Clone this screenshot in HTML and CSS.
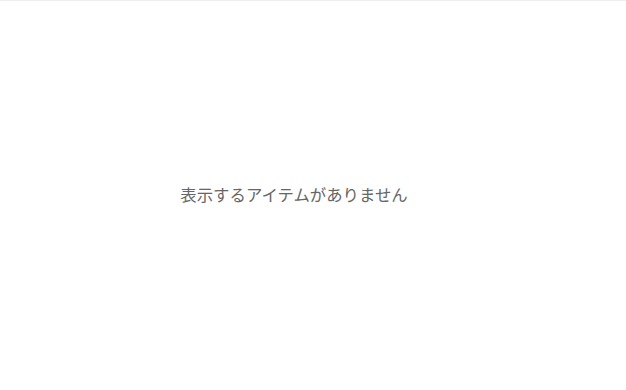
FILE: index.html
```html
<!DOCTYPE html>
<html lang="ja">
<head>
<meta charset="utf-8">
<link rel="stylesheet" href="styles.css">
</head>
<body>
<div class="page">
  <div class="empty">表示するアイテムがありません</div>
</div>
</body>
</html>
```
FILE: styles.css
```css
html, body {
  margin: 0;
  padding: 0;
  background: #fff;
}
.page {
  box-sizing: border-box;
  width: 626px;
  height: 390px;
  border-top: 1px solid #eeeeee;
  display: flex;
  align-items: center;
  justify-content: center;
  padding-right: 38px;
  padding-bottom: 3px;
}
.empty {
  font-family: "Noto Sans CJK JP", sans-serif;
  font-size: 16.4px;
  line-height: 20px;
  color: #666666;
}
```
